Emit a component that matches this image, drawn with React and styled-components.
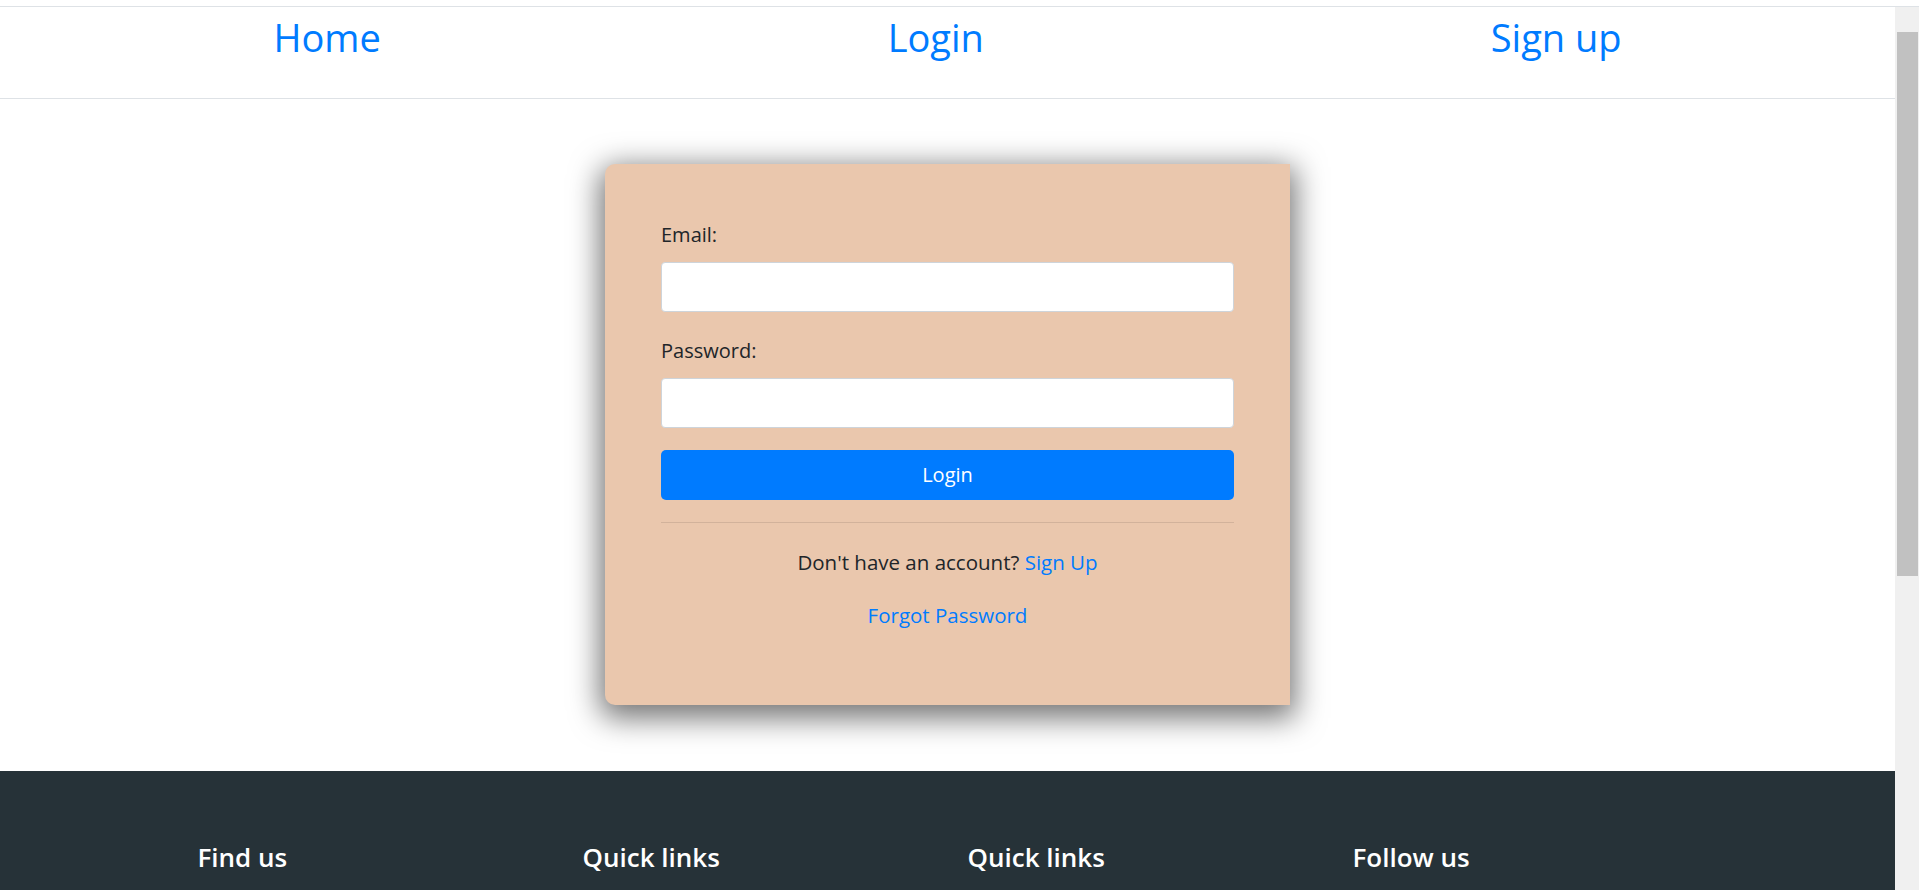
import React from 'react';
import styled, { createGlobalStyle } from 'styled-components';

const GlobalStyle = createGlobalStyle`
  * {
    box-sizing: border-box;
  }

  /* the right-hand strip stands in for the page's scrollbar */
  html {
    background:
      linear-gradient(#dee2e6, #dee2e6) 0 6px / 100% 1px no-repeat,
      linear-gradient(#fff, #fff) 0 0 / 100% 6px no-repeat,
      linear-gradient(#c1c1c1, #c1c1c1) right 1px top 32px / 21px 544px no-repeat,
      #f0f0f0;
  }

  body {
    margin: 0 24px 0 0;
    font-family: "Open Sans", "Noto Sans", sans-serif;
    font-size: 20px;
    line-height: 1.5;
    color: #212529;
    background: #fff;
  }
`;

const Page = styled.div`
  padding-top: 6px;
`;

const Header = styled.nav`
  display: flex;
  justify-content: space-around;
  align-items: flex-start;
  padding: 6px 20px 37px;
  border-top: 1px solid #dee2e6;
  border-bottom: 1px solid #dee2e6;
`;

const NavLink = styled.a`
  font-size: 38px;
  line-height: 48px;
  font-weight: 400;
  color: #007bff;
  text-decoration: none;
`;

const Main = styled.main`
  display: flex;
  justify-content: center;
  padding: 65px 0 66px;
`;

const Card = styled.div`
  width: 685px;
  padding: 56px;
  background: #eac7ad;
  border-radius: 10px 0 0 10px;
  box-shadow: 0 8px 30px 5px rgba(0, 0, 0, 0.55);
`;

const Form = styled.form`
  display: flex;
  flex-direction: column;
`;

const Group = styled.div`
  display: flex;
  flex-direction: column;
  margin-bottom: ${(p) => p.$gap || 24}px;
`;

const Label = styled.label`
  margin-bottom: 12px;
  line-height: 30px;
`;

const Input = styled.input`
  height: 50px;
  padding: 6px 12px;
  font: inherit;
  background: #fff;
  border: 1px solid #ced4da;
  border-radius: 4px;
  outline: none;
`;

const Button = styled.button`
  height: 50px;
  font: inherit;
  color: #fff;
  background: #007bff;
  border: none;
  border-radius: 5px;
  cursor: pointer;
`;

const Divider = styled.hr`
  margin: 22px 0 24px;
  border: 0;
  border-top: 1px solid rgba(0, 0, 0, 0.1);
`;

const Line = styled.p`
  margin: 0 0 ${(p) => p.$gap}px;
  text-align: center;
  line-height: 30px;
  font-size: 20.5px;
`;

const Link = styled.a`
  color: #007bff;
  text-decoration: none;
`;

const Footer = styled.footer`
  min-height: 586px;
  padding: 71px 0 60px;
  background: #263238;
  color: #fff;
`;

const FooterInner = styled.div`
  display: grid;
  grid-template-columns: repeat(4, 1fr);
  width: 1540px;
  margin: 0 auto;
`;

const Column = styled.div`
  padding: 0 20px;
`;

const ColumnTitle = styled.h4`
  margin: 0;
  font-size: 26px;
  line-height: 1.2;
  font-weight: 600;
`;

const columns = ['Find us', 'Quick links', 'Quick links', 'Follow us'];

export default function App() {
  return (
    <Page>
      <GlobalStyle />
      <Header>
        <NavLink href="#">Home</NavLink>
        <NavLink href="#">Login</NavLink>
        <NavLink href="#">Sign up</NavLink>
      </Header>

      <Main>
        <Card>
          <Form onSubmit={(e) => e.preventDefault()}>
            <Group>
              <Label htmlFor="email">Email:</Label>
              <Input id="email" type="email" />
            </Group>
            <Group $gap={22}>
              <Label htmlFor="password">Password:</Label>
              <Input id="password" type="password" />
            </Group>
            <Button type="submit">Login</Button>
          </Form>
          <Divider />
          <Line $gap={23}>
            Don't have an account? <Link href="#">Sign Up</Link>
          </Line>
          <Line $gap={19}>
            <Link href="#">Forgot Password</Link>
          </Line>
        </Card>
      </Main>

      <Footer>
        <FooterInner>
          {columns.map((title, i) => (
            <Column key={i}>
              <ColumnTitle>{title}</ColumnTitle>
            </Column>
          ))}
        </FooterInner>
      </Footer>
    </Page>
  );
}
